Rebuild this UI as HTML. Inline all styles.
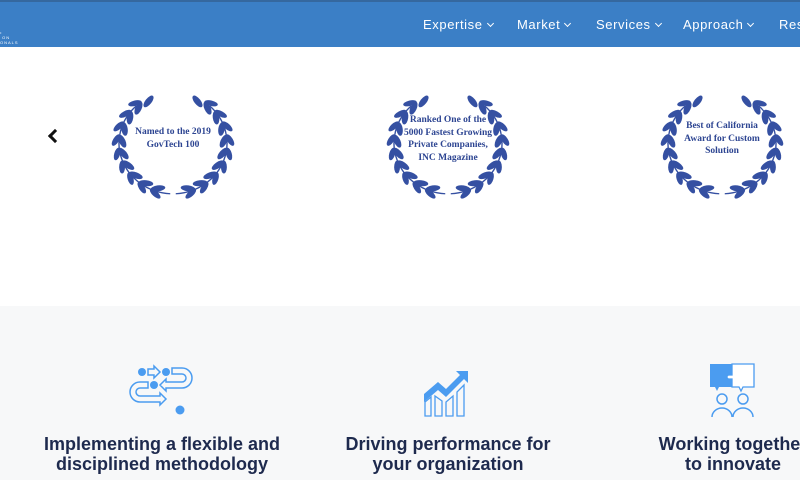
<!DOCTYPE html>
<html><head><meta charset="utf-8"><style>
*{margin:0;padding:0;box-sizing:border-box}
body{width:800px;height:480px;overflow:hidden;background:#fff;font-family:"Liberation Sans",sans-serif;position:relative}
.nav{position:absolute;left:0;top:0;width:800px;height:47px;background:#3b7fc6;border-top:2px solid #35689f}
.nav span{position:absolute;top:15px;color:#fff;font-size:13px;letter-spacing:.6px;white-space:nowrap}
.nav span i{display:inline-block;width:5px;height:5px;border-right:1.6px solid #fff;border-bottom:1.6px solid #fff;transform:rotate(45deg);margin-left:5px;position:relative;top:-3px}
.logo{position:absolute;left:0;top:28px;color:#fff;font-size:4px;line-height:5px;letter-spacing:1px}
.laurel{position:absolute;width:150px;height:125px}
.ltext{position:absolute;font-family:"Liberation Serif",serif;font-weight:bold;color:#2d4592;font-size:9.5px;line-height:12.5px;text-align:center}
.gray{position:absolute;left:0;top:306px;width:800px;height:174px;background:#f7f8f9}
.h{position:absolute;top:434px;width:320px;text-align:center;font-weight:bold;font-size:18px;line-height:20px;color:#1e2a4e}
.arrow{position:absolute;left:50px;top:131px;width:10px;height:10px;border-left:3px solid #111;border-bottom:3px solid #111;transform:rotate(45deg)}
</style></head><body>
<svg width="0" height="0" style="position:absolute"><defs>
<g id="half" fill="#3550a2">
<g transform="rotate(12)"><ellipse cx="-5" cy="55" rx="8" ry="3.5" transform="rotate(-20 -5 55)"/></g>
<g transform="rotate(27)"><ellipse cx="-5" cy="55" rx="8" ry="3.5" transform="rotate(-20 -5 55)"/></g>
<g transform="rotate(42)"><ellipse cx="-5" cy="55" rx="8" ry="3.5" transform="rotate(-20 -5 55)"/></g>
<g transform="rotate(57)"><ellipse cx="-5" cy="55" rx="8" ry="3.5" transform="rotate(-20 -5 55)"/></g>
<g transform="rotate(72)"><ellipse cx="-5" cy="55" rx="8" ry="3.5" transform="rotate(-20 -5 55)"/></g>
<g transform="rotate(87)"><ellipse cx="-5" cy="55" rx="8" ry="3.5" transform="rotate(-20 -5 55)"/></g>
<g transform="rotate(102)"><ellipse cx="-5" cy="55" rx="8" ry="3.5" transform="rotate(-20 -5 55)"/></g>
<g transform="rotate(117)"><ellipse cx="-5" cy="55" rx="8" ry="3.5" transform="rotate(-20 -5 55)"/></g>
<g transform="rotate(132)"><ellipse cx="-5" cy="55" rx="8" ry="3.5" transform="rotate(-20 -5 55)"/></g>
<g transform="rotate(146)"><ellipse cx="-5" cy="55" rx="8" ry="3.5" transform="rotate(-20 -5 55)"/></g>
<g transform="rotate(20)"><ellipse cx="2" cy="62" rx="7.5" ry="3.2" transform="rotate(25 2 62)"/></g>
<g transform="rotate(35)"><ellipse cx="2" cy="62" rx="7.5" ry="3.2" transform="rotate(25 2 62)"/></g>
<g transform="rotate(50)"><ellipse cx="2" cy="62" rx="7.5" ry="3.2" transform="rotate(25 2 62)"/></g>
<g transform="rotate(65)"><ellipse cx="2" cy="62" rx="7.5" ry="3.2" transform="rotate(25 2 62)"/></g>
<g transform="rotate(80)"><ellipse cx="2" cy="62" rx="7.5" ry="3.2" transform="rotate(25 2 62)"/></g>
<g transform="rotate(95)"><ellipse cx="2" cy="62" rx="7.5" ry="3.2" transform="rotate(25 2 62)"/></g>
<g transform="rotate(110)"><ellipse cx="2" cy="62" rx="7.5" ry="3.2" transform="rotate(25 2 62)"/></g>
<g transform="rotate(125)"><ellipse cx="2" cy="62" rx="7.5" ry="3.2" transform="rotate(25 2 62)"/></g>
<g transform="rotate(140)"><ellipse cx="2" cy="62" rx="7.5" ry="3.2" transform="rotate(25 2 62)"/></g>
<path d="M-3,59 A59,59 0 0 1 -40,-43" fill="none" stroke="#3550a2" stroke-width="1.5"/>
</g>
<g id="laurel"><g transform="translate(75,60) scale(0.92,0.86)"><use href="#half"/><use href="#half" transform="scale(-1,1)"/></g></g>
</defs></svg>

<div class="nav">
<div class="logo">•<br>&nbsp;ON<br>ONALS</div>
<span style="left:423px">Expertise<i></i></span>
<span style="left:517px">Market<i></i></span>
<span style="left:596px">Services<i></i></span>
<span style="left:683px">Approach<i></i></span>
<span style="left:779px">Res</span>
</div>
<div class="arrow"></div>

<svg class="laurel" style="left:98px;top:83px" viewBox="0 0 150 125"><use href="#laurel"/></svg>
<div class="ltext" style="left:113px;top:126px;width:120px">Named to the 2019<br>GovTech 100</div>
<svg class="laurel" style="left:373px;top:83px" viewBox="0 0 150 125"><use href="#laurel"/></svg>
<div class="ltext" style="left:388px;top:114px;width:120px">Ranked One of the<br>5000 Fastest Growing<br>Private Companies,<br>INC Magazine</div>
<svg class="laurel" style="left:647px;top:83px" viewBox="0 0 150 125"><use href="#laurel"/></svg>
<div class="ltext" style="left:662px;top:120px;width:120px">Best of California<br>Award for Custom<br>Solution</div>

<div class="gray"></div>
<svg style="position:absolute;left:128px;top:363px" width="68" height="56" viewBox="0 0 68 56" fill="none" stroke="#4b9cf0" stroke-width="1.5">
<circle cx="14" cy="9" r="4" fill="#4b9cf0" stroke="none"/><circle cx="38" cy="9" r="4" fill="#4b9cf0" stroke="none"/>
<path d="M20,6h6v-3l6,6-6,6v-3h-6z"/>
<path d="M44,5h10a10,10 0 0 1 0,20h-16v3l-6,-6 6,-6v3h16a4,4 0 0 0 0,-8h-10z"/>
<circle cx="26" cy="22" r="4" fill="#4b9cf0" stroke="none"/>
<path d="M20,19h-8a10,10 0 0 0 0,20h20v3l6,-6-6,-6v3h-20a4,4 0 0 1 0,-8h8z"/>
<circle cx="52" cy="47" r="4.5" fill="#4b9cf0" stroke="none"/>
</svg>
<svg style="position:absolute;left:422px;top:364px" width="50" height="54" viewBox="0 0 50 54" fill="none" stroke="#4b9cf0" stroke-width="1.3">
<path d="M2,30l14,-12 8,7 14,-14-4,-4h12v12l-4,-4-18,18-8,-7-14,12z" fill="#4b9cf0" stroke="none"/>
<path d="M3,52v-14l6,-5v19zM13,52v-20l7,5v15zM24,52v-14l7,-6v20zM35,52v-24l7,-7v31z"/>
</svg>
<svg style="position:absolute;left:708px;top:363px" width="50" height="56" viewBox="0 0 50 56">
<path d="M2,1h22v11h-3a2,2 0 0 0 0,4h3v8h-13l-2,4-2,-4h-5z" fill="#4b9cf0"/>
<path d="M24,1h22v23h-11l-2,4-2,-4h-7v-8h-3a2,2 0 0 1 0,-4h3z" fill="#fff" stroke="#4b9cf0" stroke-width="1.3"/>
<g fill="none" stroke="#4b9cf0" stroke-width="1.5"><circle cx="14" cy="36" r="5"/><path d="M4,54a10,9 0 0 1 20,0"/><circle cx="35" cy="36" r="5"/><path d="M25,54a10,9 0 0 1 20,0"/></g>
</svg>
<div class="h" style="left:2px">Implementing a flexible and<br>disciplined methodology</div>
<div class="h" style="left:288px">Driving performance for<br>your organization</div>
<div class="h" style="left:573px">Working together<br>to innovate</div>
</body></html>
